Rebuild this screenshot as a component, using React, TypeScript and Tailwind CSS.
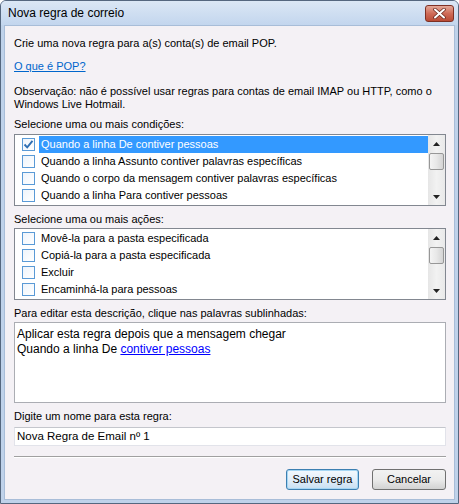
import React from "react";

const conditions = [
  "Quando a linha De contiver pessoas",
  "Quando a linha Assunto contiver palavras específicas",
  "Quando o corpo da mensagem contiver palavras específicas",
  "Quando a linha Para contiver pessoas",
];

const actions = [
  "Movê-la para a pasta especificada",
  "Copiá-la para a pasta especificada",
  "Excluir",
  "Encaminhá-la para pessoas",
];

function Checkbox({ checked }: { checked?: boolean }) {
  return (
    <div className="w-[13px] h-[13px] shrink-0 border border-[#5a9ad6] bg-gradient-to-br from-[#eef4fb] to-white flex items-center justify-center">
      {checked && (
        <svg width="11" height="11" viewBox="0 0 11 11">
          <path d="M1.5 5.5 L4.2 8.3 L9.5 1.8" fill="none" stroke="#2f6fb3" strokeWidth="1.9" />
        </svg>
      )}
    </div>
  );
}

function Arrow({ up }: { up?: boolean }) {
  return (
    <div className="h-[17px] flex items-center justify-center">
      <svg width="7" height="4" viewBox="0 0 7 4">
        {up ? <path d="M0 4 L3.5 0 L7 4 Z" fill="#222" /> : <path d="M0 0 L7 0 L3.5 4 Z" fill="#222" />}
      </svg>
    </div>
  );
}

function Scrollbar() {
  return (
    <div className="w-[17px] h-full flex flex-col bg-gradient-to-r from-[#e6e6e6] via-[#f2f2f2] to-[#e9e9e9]">
      <Arrow up />
      <div className="mt-[1px] mx-auto w-[15px] h-[17px] rounded-[2px] border border-[#979797] bg-gradient-to-r from-[#f4f4f4] via-[#e8e8e8] to-[#d4d4d4]" />
      <div className="flex-1" />
      <Arrow />
    </div>
  );
}

function ListBox({ items, selected }: { items: string[]; selected?: number }) {
  return (
    <div className="h-[72px] border border-[#828790] bg-white flex">
      <div className="flex-1 pt-[1px]">
        {items.map((t, i) => (
          <div key={t} className="h-[17px] flex items-center">
            <div className="ml-[7px]">
              <Checkbox checked={i === selected} />
            </div>
            <div
              className={
                i === selected
                  ? "ml-[4px] flex-1 h-full pl-[2px] flex items-center bg-[#3399ff] text-white whitespace-nowrap"
                  : "ml-[4px] flex-1 h-full pl-[2px] flex items-center whitespace-nowrap"
              }
            >
              {t}
            </div>
          </div>
        ))}
      </div>
      <Scrollbar />
    </div>
  );
}

export default function App() {
  return (
    <div className="w-[459px] h-[504px] flex flex-col bg-[#bfd2ea] border border-[#55677f] rounded-t-[6px] font-['Liberation_Sans',Arial,sans-serif] text-[11px] text-black overflow-hidden">
      <div className="h-[24px] shrink-0 flex items-center justify-between pl-[7px] pr-[4px] bg-gradient-to-b from-[#dbe7f5] to-[#c3d6ee]">
        <span className="text-[12px] text-black">Nova regra de correio</span>
        <div className="w-[29px] h-[17px] rounded-[3px] border border-[#7e3024] bg-gradient-to-b from-[#e3a898] via-[#cf6b58] to-[#b94a35] flex items-center justify-center">
          <svg width="13" height="11" viewBox="0 0 13 11">
            <path d="M2 1.5 L11 9.5 M11 1.5 L2 9.5" stroke="#6b2a20" strokeWidth="3.6" strokeLinecap="round" />
            <path d="M2 1.5 L11 9.5 M11 1.5 L2 9.5" stroke="#ffffff" strokeWidth="2" strokeLinecap="round" />
          </svg>
        </div>
      </div>
      <div className="flex-1 mx-[3px] mb-[3px] bg-[#f4f1f5] border border-[#a8bdd8] flex flex-col pl-[9px] pr-[8px] pt-[11px] leading-[13px]">
        <div>Crie uma nova regra para a(s) conta(s) de email POP.</div>
        <div className="mt-[10px]">
          <span className="text-[#0066cc] underline">O que é POP?</span>
        </div>
        <div className="mt-[12px]">
          Observação: não é possível usar regras para contas de email IMAP ou HTTP, como o
          <br />
          Windows Live Hotmail.
        </div>
        <div className="mt-[7px]">Selecione uma ou mais condições:</div>
        <div className="mt-[3px]">
          <ListBox items={conditions} selected={0} />
        </div>
        <div className="mt-[7px]">Selecione uma ou mais ações:</div>
        <div className="mt-[2px]">
          <ListBox items={actions} />
        </div>
        <div className="mt-[7px]">Para editar esta descrição, clique nas palavras sublinhadas:</div>
        <div className="mt-[2px] h-[81px] border border-[#abadb3] bg-white pl-[2px] pt-[4px] text-[12px] leading-[15px]">
          <div>Aplicar esta regra depois que a mensagem chegar</div>
          <div>
            Quando a linha De <span className="text-[#0000ff] underline">contiver pessoas</span>
          </div>
        </div>
        <div className="mt-[7px]">Digite um nome para esta regra:</div>
        <div className="mt-[4px] h-[19px] border border-[#e2e3ea] border-t-[#c4c6cc] bg-white px-[2px] flex items-center text-[11.5px]">
          Nova Regra de Email nº 1
        </div>
        <div className="mt-[10px] border-t border-[#a0a0a0] border-b border-b-white" />
        <div className="mt-[11px] flex justify-end gap-[13px]">
          <div className="w-[73px] h-[21px] rounded-[3px] border border-[#3c7fb1] bg-gradient-to-b from-[#f4f9fd] via-[#e3eff9] to-[#c8dff2] flex items-center justify-center shadow-[inset_0_0_0_1px_#a6d6f3]">
            Salvar regra
          </div>
          <div className="w-[74px] h-[21px] rounded-[3px] border border-[#707070] bg-gradient-to-b from-[#f2f2f2] via-[#ebebeb] to-[#d2d2d2] flex items-center justify-center">
            Cancelar
          </div>
        </div>
      </div>
    </div>
  );
}
